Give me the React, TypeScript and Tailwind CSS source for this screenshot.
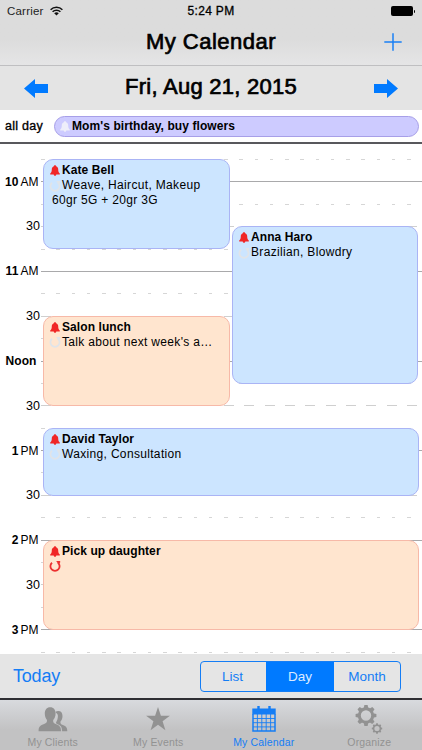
import type { ReactNode } from "react";

// One quarter of an hour on the day grid, in pixels.
const QUARTER = 22.4;
const FIRST_QUARTER = 15.2;

type Tone = "blue" | "orange";

type CalendarEvent = {
  title: string;
  lines: string[];
  tone: Tone;
  repeats?: boolean;
  start: number;
  length: number;
  column: "left" | "right" | "full";
};

// Start and length are counted in quarters from 9:45.
const events: CalendarEvent[] = [
  { title: "Kate Bell", lines: ["Weave, Haircut, Makeup", "60gr 5G + 20gr 3G"], tone: "blue", start: 0, length: 4, column: "left" },
  { title: "Anna Haro", lines: ["Brazilian, Blowdry"], tone: "blue", start: 3, length: 7, column: "right" },
  { title: "Salon lunch", lines: ["Talk about next week's a…"], tone: "orange", start: 7, length: 4, column: "left" },
  { title: "David Taylor", lines: ["Waxing, Consultation"], tone: "blue", start: 12, length: 3, column: "full" },
  { title: "Pick up daughter", lines: [""], tone: "orange", repeats: true, start: 17, length: 4, column: "full" },
];

const columns = {
  left: "left-[43px] w-[187px]",
  right: "left-[232px] w-[186px]",
  full: "left-[43px] w-[376px]",
};

const tones = {
  blue: "border-[#aab4f5] bg-[#cce5ff]",
  orange: "border-[#f7b9a8] bg-[#ffe5cf]",
};

type Slot = { bold?: string; label?: string; kind: "hour" | "half" | "quarter" };

const slots: Slot[] = [
  { kind: "quarter" },
  { kind: "hour", bold: "10", label: "AM" },
  { kind: "quarter" },
  { kind: "half", label: "30" },
  { kind: "quarter" },
  { kind: "hour", bold: "11", label: "AM" },
  { kind: "quarter" },
  { kind: "half", label: "30" },
  { kind: "quarter" },
  { kind: "hour", bold: "Noon" },
  { kind: "quarter" },
  { kind: "half", label: "30" },
  { kind: "quarter" },
  { kind: "hour", bold: "1", label: "PM" },
  { kind: "quarter" },
  { kind: "half", label: "30" },
  { kind: "quarter" },
  { kind: "hour", bold: "2", label: "PM" },
  { kind: "quarter" },
  { kind: "half", label: "30" },
  { kind: "quarter" },
  { kind: "hour", bold: "3", label: "PM" },
  { kind: "quarter" },
];

const rules = {
  hour: "bg-[#a9a9ab]",
  half: "mr-[5px] bg-[repeating-linear-gradient(90deg,#cfcfcf_0_10px,transparent_10px_20.33px)]",
  quarter: "mr-[5px] bg-[repeating-linear-gradient(90deg,#d6d6d6_0_3.5px,transparent_3.5px_15.25px)]",
};

function Bell({ className }: { className: string }) {
  return (
    <svg viewBox="0 0 10 11" className={className} fill="currentColor">
      <path d="M5 .2c.7 0 1.1.4 1.1 1C7.500 1.700 8.200 2.800 8.200 4.300c0 2.400.5 3.400 1.600 4.300v.8H.2v-.8C1.300 7.700 1.800 6.700 1.800 4.300c0-1.500.7-2.600 2.100-3.100 0-.6.4-1 1.100-1zM3.700 9.400h2.600c-.1.900-.6 1.300-1.300 1.300s-1.200-.4-1.300-1.300z" />
    </svg>
  );
}

function Repeat({ className }: { className: string }) {
  return (
    <svg viewBox="0 0 12 12" className={className} fill="none" stroke="currentColor" strokeWidth="1.8">
      <path d="M3 2.700A4.600 4.600 0 1 0 9 2.700" />
      <path d="M7.200 1h4v1.600L9.400 4.200z" fill="currentColor" stroke="none" />
    </svg>
  );
}

function Arrow({ className }: { className?: string }) {
  return (
    <svg viewBox="0 0 24 19" className={`h-[19px] w-6 text-[#007aff] ${className ?? ""}`} fill="currentColor">
      <path d="M0 9.500 11 0v5h13v9H11v5z" />
    </svg>
  );
}

function EventCard({ event }: { event: CalendarEvent }) {
  return (
    <div
      className={`absolute rounded-[10px] border pl-[5px] pt-[3px] text-xs leading-[15.3px] ${columns[event.column]} ${tones[event.tone]}`}
      style={{
        top: FIRST_QUARTER + event.start * QUARTER - 0.5,
        height: event.length * QUARTER + 1,
      }}
    >
      <div className="flex items-center font-bold tracking-[0.08px]">
        <Bell className="mr-[2px] ml-px h-[11px] w-[10px] text-[#f02626]" />
        {event.title}
      </div>
      {event.lines.map((line, i) => (
        <div key={i} className="flex h-[15.3px] items-center whitespace-nowrap tracking-[0.33px]">
          {i === 0 ? (
            <Repeat
              className={`mr-px h-3 w-3 shrink-0 ${
                event.repeats ? "text-[#ec3030]" : "text-[#e0e4e9]"
              }`}
            />
          ) : (
            <span className="w-[3px]" />
          )}
          {line}
        </div>
      ))}
    </div>
  );
}

function Tab({ label, active, children }: { label: string; active?: boolean; children: ReactNode }) {
  return (
    <div className={`flex flex-1 flex-col items-center ${active ? "text-[#147df5]" : "text-[#929292]"}`}>
      <div className="flex h-[36px] items-center pt-[3px]">{children}</div>
      <span className="text-[10.5px] leading-[15px] tracking-[0.15px]">{label}</span>
    </div>
  );
}

const teeth = [0, 45, 90, 135, 180, 225, 270, 315];

function Gear({ x, y, scale }: { x: number; y: number; scale: number }) {
  return (
    <g transform={`translate(${x} ${y}) scale(${scale})`}>
      <circle r="6.700" fill="none" stroke="currentColor" strokeWidth="3" />
      {teeth.map((angle) => (
        <path key={angle} d="M-2.300-7.200-1.600-10.400h3.200L2.300-7.200z" fill="currentColor" transform={`rotate(${angle})`} />
      ))}
    </g>
  );
}

export default function App() {
  return (
    <div className="flex h-[750px] w-[422px] flex-col overflow-hidden bg-white font-['Liberation_Sans',Arial,sans-serif] text-black">
      <header className="flex h-[66px] flex-col border-b border-[#bfbfc1] bg-linear-to-b from-[#dcdcdc] from-60% to-[#e5e5e6]">
        <div className="grid h-[22px] grid-cols-3 items-center px-[7px] text-[11.500px] leading-[22px]">
          <div className="flex items-center gap-[6px] tracking-[0.2px] text-[#222]">
            Carrier
            <svg viewBox="0 0 13 10" className="h-[10px] w-[13px]" fill="none" stroke="#111" strokeWidth="1.500">
              <path d="M.6 3.700a8.300 8.300 0 0 1 11.800 0M2.600 5.800a5.500 5.500 0 0 1 7.800 0" />
              <path d="M6.500 9.600 4.200 7.300a3.300 3.300 0 0 1 4.600 0z" fill="#111" stroke="none" />
            </svg>
          </div>
          <div className="text-center text-xs leading-[22px] tracking-[0.35px] [-webkit-text-stroke:0.3px_#000]">5:24 PM</div>
          <div className="flex items-center justify-end gap-px">
            <div className="h-[10px] w-[22px] rounded-[2px] bg-black" />
            <div className="h-[3px] w-[1.500px] rounded-r bg-black" />
          </div>
        </div>
        <div className="grid h-[40px] grid-cols-[60px_1fr_60px] items-center">
          <h1 className="col-start-2 text-center text-[22px] leading-10 tracking-[0.5px] [-webkit-text-stroke:0.7px_#000]">
            My Calendar
          </h1>
          <svg viewBox="0 0 18 18" className="ml-[22px] h-[18px] w-[18px]" stroke="#1a80f5" strokeWidth="1.500">
            <path d="M9 .3v17.400M.3 9h17.400" />
          </svg>
        </div>
      </header>

      <div className="flex h-[44px] items-center justify-between bg-[#e4e4e4] px-6">
        <Arrow />
        <h2 className="pb-[2px] text-[22px] leading-10 tracking-[0.250px] [-webkit-text-stroke:0.7px_#000]">Fri, Aug 21, 2015</h2>
        <Arrow className="rotate-180" />
      </div>

      <div className="flex h-[34px] shrink-0 items-center border-b-2 border-[#58585c] pr-[3px]">
        <span className="w-[54px] pl-[5px] text-[12.500px] tracking-[0.250px] [-webkit-text-stroke:0.35px_#000]">all day</span>
        <div className="flex h-[21px] flex-1 items-center rounded-full border border-[#a79fe8] bg-[#cdcbff] pl-[5px] text-xs font-bold tracking-[0.09px]">
          <Bell className="mr-[2px] h-[11px] w-[10px] text-[#eeeefa]" />
          Mom's birthday, buy flowers
        </div>
      </div>

      <main className="relative h-[510px] overflow-hidden pt-[4.3px]">
        {slots.map((slot, i) => (
          <div key={i} className="flex h-[22.4px] items-center text-xs leading-none">
            <div className="flex w-[41px] shrink-0 items-baseline justify-end gap-[2px]">
              {slot.bold ? <span className="font-bold tracking-[0.1px]">{slot.bold}</span> : null}
              <span className={slot.kind === "half" ? "pr-px text-[12.5px]" : "pr-[2.5px]"}>{slot.label}</span>
            </div>
            <div className={`h-px flex-1 ${rules[slot.kind]}`} />
          </div>
        ))}
        {events.map((event) => (
          <EventCard key={event.title} event={event} />
        ))}
      </main>

      <div className="flex h-[44px] shrink-0 items-center justify-between bg-[#e5e5e5] pr-[21px] pl-[13px] text-[#147df5]">
        <span className="pt-px text-[18px] tracking-[-0.2px]">Today</span>
        <div className="flex h-[31px] w-[201px] overflow-hidden rounded-[4px] border border-[#147df5] text-[13.500px] leading-[30px]">
          <span className="w-[65px] pr-[2px] text-center">List</span>
          <span className="w-[68px] bg-[#007aff] text-center text-[#dcebff]">Day</span>
          <span className="flex-1 text-center">Month</span>
        </div>
      </div>

      <nav className="flex h-[52px] shrink-0 border-t-2 border-[#2f2f33] bg-linear-to-b from-[#d8dade] to-[#c2c2c3] to-60%">
        <Tab label="My Clients">
          <svg viewBox="0 0 30 25" className="h-[25px] w-[30px]" fill="currentColor">
            <path d="M17.300 5c.9-.6 1.900-.9 2.900-.9 2.900 0 4.300 2 4.300 4.900 0 2.400-.8 4.200-2 5.500-.3 2 .3 2.700 2.400 3.600 3.200 1.300 4.400 2.400 4.400 6.100h-5.200c0-4.200-1.300-5.600-4.500-6.900-1.400-.6-1.700-1-1.500-2 1.300-2 1.800-4 1.800-6.500 0-1.500-1.300-2.500-2.600-3.800z" />
            <path d="M12.200.2c3.500 0 5.400 2.600 5.400 6.400 0 2.700-1 5-2.400 6.400-.3 2.600.5 3.200 3 4.200 3.600 1.400 4.800 2.900 4.800 7H.6c0-4.100 1.200-5.600 4.900-7 2.500-1 3.800-1.700 3.500-4.200C7.700 11.600 6.800 9.300 6.800 6.600 6.800 2.800 8.700.2 12.200.2z" />
          </svg>
        </Tab>
        <Tab label="My Events">
          <svg viewBox="0 0 24 24" className="h-6 w-6" fill="currentColor">
            <path d="m12 0 2.900 8.800h9l-7.300 5.400 2.800 9L12 17.700l-7.400 5.500 2.800-9L.1 8.800h9z" />
          </svg>
        </Tab>
        <Tab label="My Calendar" active>
          <svg viewBox="0 0 24 26" className="h-[26px] w-6" fill="none" stroke="currentColor">
            <path d="M1 8v17h22V8" strokeWidth="1.500" />
            <path d="M.3 2.500h23.400v6H.3z" fill="currentColor" stroke="none" />
            <path d="M6.500 0v5M17.500 0v5" strokeWidth="2.400" />
            <path d="M5.400 8v17M9.800 8v17M14.200 8v17M18.600 8v17M1 12.500h22M1 16.700h22M1 20.900h22" strokeWidth=".9" />
          </svg>
        </Tab>
        <Tab label="Organize">
          <svg viewBox="0 0 28 29" className="h-[29px] w-7">
            <Gear x={11} y={10.5} scale={1} />
            <Gear x={22} y={23.5} scale={0.5} />
          </svg>
        </Tab>
      </nav>
    </div>
  );
}
